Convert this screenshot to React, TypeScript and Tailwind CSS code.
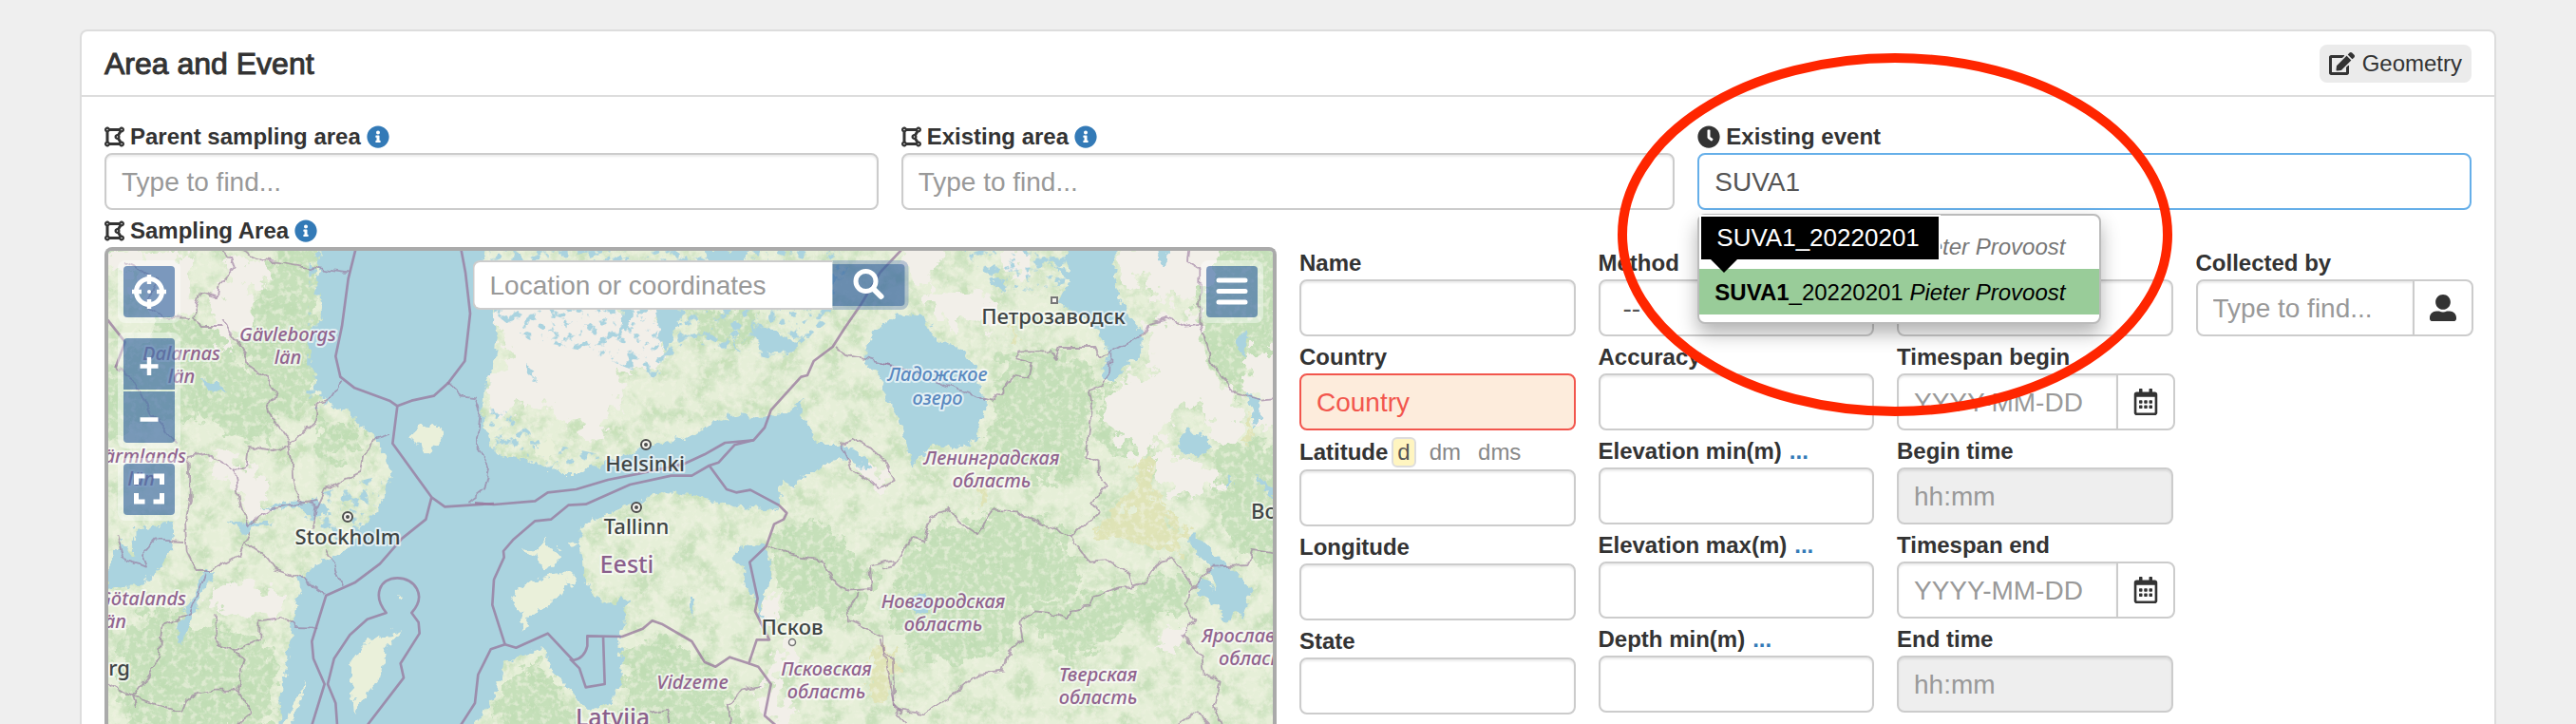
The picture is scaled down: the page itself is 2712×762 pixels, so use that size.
import { useId, type ReactNode } from "react";
import {
  FaClock,
  FaDrawPolygon,
  FaEdit,
  FaInfoCircle,
  FaRegCalendarAlt,
  FaUserAlt,
} from "react-icons/fa";

const base =
  "h-[60px] w-full min-w-0 rounded-lg border-2 px-4 pt-0.5 text-[28px] outline-none";
const control = `${base} border-[#ccc] bg-white text-[#555] shadow-[inset_0_2px_2px_rgba(0,0,0,0.075)] placeholder:text-[#999]`;
const disabledControl = `${base} border-[#ccc] bg-[#eee] text-[#555] shadow-[inset_0_2px_2px_rgba(0,0,0,0.075)] placeholder:text-[#999]`;
const errorControl = `${base} border-[#f2564d] bg-[#fdecdc] text-[#f2564d] placeholder:text-[#f2564d]`;

function Field({
  label,
  before,
  after,
  rowClass = "h-[39px]",
  children,
}: {
  label: string;
  before?: ReactNode;
  after?: ReactNode;
  rowClass?: string;
  children: (id: string) => ReactNode;
}) {
  const id = useId();
  return (
    <div className="relative min-w-0">
      <div
        className={`flex items-center pt-1 text-2xl leading-8 whitespace-nowrap ${rowClass}`}
      >
        {before}
        <label htmlFor={id} className="font-bold">
          {label}
        </label>
        {after}
      </div>
      {children(id)}
    </div>
  );
}

function TextField({
  label,
  placeholder,
  variant = "normal",
  after,
  before,
  rowClass,
}: {
  label: string;
  placeholder?: string;
  variant?: "normal" | "error" | "disabled";
  after?: ReactNode;
  before?: ReactNode;
  rowClass?: string;
}) {
  const look = { normal: control, error: errorControl, disabled: disabledControl };
  return (
    <Field label={label} before={before} after={after} rowClass={rowClass}>
      {(id) => (
        <input
          id={id}
          className={look[variant]}
          placeholder={placeholder}
          disabled={variant === "disabled"}
        />
      )}
    </Field>
  );
}

function AddonField({
  label,
  placeholder,
  action,
  icon,
}: {
  label: string;
  placeholder: string;
  action: string;
  icon: ReactNode;
}) {
  return (
    <Field label={label}>
      {(id) => (
        <div className="-mr-0.5 flex">
          <input
            id={id}
            className={`${control} rounded-r-none`}
            placeholder={placeholder}
          />
          <button
            type="button"
            aria-label={action}
            className="-ml-0.5 flex h-[60px] shrink-0 items-center rounded-r-lg border-2 border-[#ccc] bg-white px-4 text-[28px] text-[#333]"
          >
            {icon}
          </button>
        </div>
      )}
    </Field>
  );
}

const Polygon = () => <FaDrawPolygon className="mr-1.5 h-6 w-[21px] shrink-0" />;
const Info = () => <FaInfoCircle className="ml-1.5 shrink-0 text-[#337ab7]" />;
const More = () => (
  <a href="#more" className="ml-2 font-bold text-[#337ab7]">
    ...
  </a>
);

function FormatToggle() {
  return (
    <span className="ml-1 flex items-center gap-3 text-[#888]">
      <button
        type="button"
        className="h-8 rounded-md border-2 border-[#ddd] bg-[#fff5c0] px-1 leading-7 text-[#555]"
      >
        d
      </button>
      <button type="button" className="px-0.5">
        dm
      </button>
      <button type="button" className="px-1">
        dms
      </button>
    </span>
  );
}

/* ---------- Map ---------- */

const SEA =
  "M340 255 333 293 340 327 327 363 332 410 347 425 363 432 383 450 397 463 412 497 400 533 380 553 367 577 340 590 313 610 317 623 307 657 303 693 297 717 293 770 495 770 520 733 533 697 572 682 580 703 600 723 607 740 623 748 643 738 655 717 653 667 662 633 653 627 643 638 627 630 615 610 610 570 615 550 643 540 660 530 677 527 703 517 737 522 767 533 817 537 823 530 822 503 837 513 847 498 863 498 870 485 887 483 905 490 918 494 914 484 902 474 883 467 863 467 853 450 840 432 847 420 827 435 800 440 780 435 753 443 733 457 700 467 677 470 647 483 607 498 587 498 563 487 520 478 507 437 510 410 520 383 523 350 520 323 507 283 515 255Z";
const LAKES = [
  "M947 330 973 333 983 353 1013 370 1027 387 1030 410 1043 427 1032 440 1028 463 1010 472 983 467 960 492 950 450 933 417 930 403 913 380 910 370 920 350Z",
  "M1123 255 1175 255 1173 293 1183 323 1203 350 1202 373 1187 383 1173 402 1160 397 1167 370 1157 353 1143 333 1113 320 1127 293 1103 277 1125 285Z",
  "M1240 462Q1245 453 1258 455 1273 455 1273 468 1275 480 1258 480 1240 480 1240 462Z",
  "M1255 560 1283 587 1300 603 1318 620 1310 650 1300 642 1290 657 1283 637 1260 627 1263 607 1280 620 1274 597 1253 572Z",
  "M777 577 807 573 812 610 800 643 807 653 800 652 793 627 785 620 783 597 772 590Z",
  "M726 628H733L731 650 726 640Z",
  "M143 557 183 550 180 583 165 600 143 617 110 620 110 603 127 570 140 590Z",
  "M217 598 226 602 210 630 200 655 190 678 186 660 200 633Z",
  "M277 536 300 528 333 527 350 537 330 545 315 533 285 536Z",
  "M240 548 260 550 290 550 262 556 258 566 250 555Z",
  "M1043 292 1060 296 1055 307 1046 303Z",
  "M1218 263 1230 263 1228 280 1220 276Z",
  "M1305 352 1313 348 1310 375 1303 370Z",
  "M1312 414 1326 420 1327 440 1320 450 1318 430Z",
  "M1324 498 1342 520 1342 526 1326 508Z",
  "M960 630 970 622 985 636 978 646 962 644Z",
  "M690 300 720 330 700 370 692 340Z",
  "M660 300 668 330 650 360 656 320Z",
  "M790 340 840 360 855 350 830 372 800 366Z",
  "M770 350 780 372 772 362Z",
  "M740 262 790 262 780 285 750 282Z",
  "M210 400 228 403 238 412 220 410Z",
  "M554 382 562 390 564 402 556 394Z",
  "M1295 500 1300 508 1292 518Z",
];
const ISLANDS = [
  "M432 460 445 448 460 447 468 458 462 466 450 476 440 468Z",
  "M423 663 407 680 403 710 387 730 373 753 370 717 368 700 378 685 390 673Z",
  "M323 715 318 735 304 770 296 770 310 742Z",
  "M538 637 543 620 573 608 597 604 600 616 573 640 558 650 548 667 550 643Z",
  "M548 580 566 578 573 567 580 578 592 583 585 594 572 601 566 585Z",
  "M595 603 603 602 608 611 600 614Z",
  "M563 470 580 463 586 475 580 483 564 480Z",
  "M418 627 424 628 422 632Z",
  "M597 571 608 572 604 577Z",
];
const CREAM = [
  "M116 266 200 266 202 320 196 335 160 332 140 300 150 285 118 290Z",
  "M245 272 275 278 288 293 260 300 272 320 262 345 248 350 236 372 230 350 225 325 230 300Z",
  "M520 322 560 312 620 320 695 325 700 372 684 392 655 394 645 442 620 460 600 440 560 425 540 435 514 438 516 395 535 385 530 350Z",
  "M225 480 245 482 260 490 282 510 280 530 262 550 250 520 230 510Z",
  "M1175 255 1290 255 1282 275 1264 310 1215 320 1212 297 1180 300Z",
  "M1210 338 1262 332 1276 390 1302 425 1305 468 1290 472 1270 445 1262 420 1230 440 1225 470 1210 465 1200 490 1180 460 1160 430 1178 400 1212 398Z",
  "M1240 482 1280 492 1290 515 1240 520 1215 500 1212 482Z",
  "M1310 368 1350 368 1350 452 1328 452 1322 420 1310 395Z",
  "M950 258 990 258 982 290 978 305 1000 310 1040 305 1050 330 1040 345 1010 335 1000 350 985 330 975 300 955 300Z",
  "M1060 262 1080 262 1084 285 1065 292Z",
  "M798 640 815 620 822 640 810 660Z",
  "M815 690 830 670 850 690 820 720 835 752 815 762 800 740Z",
  "M905 490 922 488 935 500 930 515 915 508Z",
  "M1235 650 1245 660 1240 690 1215 680Z",
  "M215 625 260 610 300 625 290 650 230 640Z",
];
const DENSE = [
  "M104 395 130 380 170 330 230 345 250 385 300 420 285 470 240 455 200 430 165 440 104 470Z",
  "M290 255 335 255 335 420 300 440 265 400 255 350 275 320Z",
  "M340 440 370 438 380 470 350 485 325 460Z",
  "M1055 375 1130 372 1155 400 1146 430 1140 500 1100 510 1060 480 1040 460Z",
  "M970 560 1060 535 1120 560 1140 620 1080 640 1050 690 990 700 940 660 950 600Z",
  "M805 560 860 545 920 600 905 640 880 650 830 640 815 600Z",
  "M1270 255 1350 255 1350 365 1310 385 1305 420 1280 390 1260 330Z",
  "M1290 460 1350 470 1350 600 1300 580 1285 530 1260 500Z",
  "M1155 400 1185 410 1180 440 1200 480 1160 475Z",
  "M120 680 160 640 230 660 290 680 285 770 140 770Z",
  "M525 730 560 690 585 720 610 770 520 770Z",
  "M660 680 700 670 760 710 780 770 650 770Z",
  "M1080 640 1140 630 1260 600 1250 640 1190 660 1120 700Z",
  "M725 325 790 320 800 345 770 365 740 360Z",
  "M550 370 570 375 575 400 560 405 545 395Z",
];
const YELLOW = [
  "M1160 545 1190 530 1200 500 1225 540 1255 560 1240 580 1200 570 1150 565Z",
  "M1200 475 1212 480 1210 500 1225 530 1205 510 1195 495Z",
  "M1222 405 1235 415 1228 430Z",
  "M1312 430 1320 440 1322 465 1312 460Z",
  "M1028 510 1042 505 1036 535 1026 530Z",
  "M920 680 945 685 940 740 915 735Z",
  "M1062 335 1075 350 1070 365Z",
];

const SHEETS = [
  {
    name: "west",
    transform: "translate(100 250) scale(0.33333)",
    major: [
      "M825 30 800 130 780 280 760 375 775 440 820 475 930 515 955 532 1000 515 1070 500 1115 460 1168 390 1185 240 1170 110 1155 30",
      "M955 532 940 650 1063 820 1105 850 1260 840",
      "M1063 820 1045 890 970 950 900 1030 820 1090 730 1130 685 1275 690 1330 725 1410 685 1540",
      "M860 1540 975 1390 965 1345 1025 1250 1022 1215 1000 1185C1050 1130 1010 1075 955 1075 900 1075 875 1130 920 1185L860 1205 805 1255 755 1330 735 1410 760 1470 765 1540",
      "M40 260 95 330 65 410",
    ],
    minor: [
      "M370 30 430 60 440 100 395 150 390 190 360 180 335 170 315 250 335 285 395 285",
      "M440 30 530 70 650 92 800 112",
      "M400 260 470 360 480 400 540 440 570 490 540 540 610 640 620 700 625 770 645 830 700 850 690 920",
      "M705 520 695 580 620 650 580 675 485 660 480 710 440 735 455 830 480 910 550 860 700 830",
      "M705 520 750 505 780 455",
      "M1115 460 1160 500 1200 505 1220 560 1205 660 1245 730 1230 800 1180 840",
      "M935 620 885 635 850 690 840 740 730 795 700 860",
      "M440 735 350 680 295 690 300 830 285 900 290 990 320 1050 370 1050 460 1000 490 930",
      "M90 80 200 130 160 215 210 250 300 255",
      "M65 410 120 450 180 560 260 650",
      "M480 970 540 1010 570 1050 660 1080 730 1130",
      "M730 985 760 1040 780 1100",
      "M280 960 190 955 150 1000 165 1040 95 1020 70 940",
      "M380 1195 390 1290 440 1305 520 1270 520 1210 590 1200 630 1230 700 1232",
      "M350 1060 300 1190 215 1220 205 1330 120 1450 200 1475 280 1500 300 1450 380 1430 450 1430 470 1330 440 1305",
      "M450 1430 495 1500 450 1536",
      "M40 1405 120 1450 130 1480",
    ],
  },
  {
    name: "centre",
    transform: "translate(500 250) scale(0.33333)",
    major: [
      "M0 838 60 843 190 832 230 805 320 795 420 765 520 745 660 715 725 685 790 648 880 640 915 600 935 545 1030 440 1050 435 1070 390 1130 345 1165 290 1220 210 1280 110 1365 20",
      "M-45 1540 0 1470 10 1380 50 1300 95 1285 55 1160 60 1080 92 1010 90 990 120 955 190 895 240 890 295 845 350 842 490 780 620 752 685 752 740 720 770 710 820 655 880 640",
      "M740 720 795 795 825 805 870 797 960 845 985 870 975 890 945 905 920 975 868 1025 893 1140 885 1180 930 1270 890 1270 865 1345 805 1325 760 1355 725 1340 685 1275 590 1220 560 1210 530 1235 465 1260 355 1258 355 1290Q345 1330 310 1335L230 1250 130 1295 95 1285",
      "M300 1330 330 1360 350 1420 410 1410 405 1258",
      "M865 1345 895 1355 935 1410 915 1510 950 1540",
    ],
    minor: [
      "M1140 345 1170 372 1240 382 1320 405",
      "M920 975 990 1000 1095 1020 1130 1080 1180 1115 1250 1110 1245 1040 1330 1020",
      "M1215 1120 1180 1170 1185 1210 1290 1260 1290 1310 1320 1340 1325 1480 1350 1500",
      "M1150 650 1190 635 1250 665 1300 710 1325 770 1280 795 1190 730 1150 650",
      "M905 1415 840 1430 800 1480 810 1536",
      "M550 1500 610 1490 620 1536",
    ],
  },
  {
    name: "east",
    transform: "translate(930 250) scale(0.33333)",
    major: [],
    minor: [
      "M40 1490 130 1505 200 1460 300 1380 380 1370 390 1320 440 1270 430 1210 480 1180 530 1185 580 1205 590 1175 650 1165 665 1130 780 1100 830 1085 870 1020 910 1010 980 1105 1040 1040 1150 1035 1165 990 1240 1000",
      "M-10 395 60 415 190 465 340 515 380 480 415 430 460 440 470 400 415 385 430 355 530 355 545 380 560 345 670 345 685 380 820 310 840 270 900 255 950 275 1000 270 1000 190 1000 100 960 75 965 30",
      "M718 370 718 425 690 465 650 480 660 540 640 690 680 710 680 750 705 780 660 840 680 870 590 945 530 915 440 880 420 865 350 860 320 900 300 940 240 900 210 860 150 880 130 960 90 950 30 1040 0 1045",
      "M590 945 650 1025 720 1020 780 1060 790 1100",
      "M1000 270 1040 400 1110 490 1190 515 1240 510",
      "M980 1105 950 1160 985 1210 940 1250 1000 1320 1010 1380 1070 1400 1050 1480 1070 1536",
      "M-10 1270 20 1400 40 1490 70 1536",
      "M930 1536 990 1495 1030 1536",
    ],
  },
];

type Label = [string, number, number, ("start" | "middle" | "end")?];
const REGIONS: Label[] = [
  ["Gävleborgs", 303, 359],
  ["län", 303, 383],
  ["Dalarnas", 191, 379],
  ["län", 191, 403],
  ["Värmlands", 196, 487, "end"],
  ["län", 163, 511, "end"],
  ["Götalands", 196, 637, "end"],
  ["län", 133, 661, "end"],
  ["Псковская", 870, 711],
  ["область", 870, 735],
  ["Vidzeme", 729, 725],
  ["Ленинградская", 1044, 489],
  ["область", 1044, 513],
  ["Новгородская", 993, 640],
  ["область", 993, 664],
  ["Тверская", 1156, 717],
  ["область", 1156, 741],
  ["Ярославская", 1265, 676, "start"],
  ["область", 1283, 700, "start"],
];
const WATERS: Label[] = [
  ["Ладожское", 987, 401],
  ["озеро", 987, 426],
];
const CITIES: Label[] = [
  ["Göteborg", 137, 711, "end"],
  ["Stockholm", 366, 573],
  ["Helsinki", 679, 496],
  ["Tallinn", 670, 562],
  ["Псков", 834, 668],
  ["Петрозаводск", 1109, 341],
  ["Вологда", 1317, 546, "start"],
];
const COUNTRIES: Label[] = [
  ["Eesti", 660, 603],
  ["Latvija", 645, 764],
];

function Labels({ items, className }: { items: Label[]; className: string }) {
  return (
    <g className={className}>
      {items.map(([text, x, y, anchor = "middle"]) => (
        <text key={text + x + y} x={x} y={y} textAnchor={anchor}>
          {text}
        </text>
      ))}
    </g>
  );
}

function BaseMap() {
  const area = {
    x: 100,
    y: 250,
    width: 1250,
    height: 530,
    filterUnits: "userSpaceOnUse" as const,
    colorInterpolationFilters: "sRGB" as const,
  };
  const sheet = { x: 104, y: 254, width: 1246, height: 518 };
  return (
    <svg
      viewBox="114 264 1226 498"
      preserveAspectRatio="xMidYMin slice"
      className="block h-full w-full"
      role="img"
      aria-label="Map of the Baltic region"
    >
      <defs>
        <filter id="coast" {...area}>
          <feTurbulence type="fractalNoise" baseFrequency="0.11" numOctaves="3" seed="4" />
          <feDisplacementMap in="SourceGraphic" scale="13" xChannelSelector="R" yChannelSelector="G" />
        </filter>
        <filter id="patch" {...area}>
          <feTurbulence type="fractalNoise" baseFrequency="0.06" numOctaves="4" seed="9" />
          <feDisplacementMap in="SourceGraphic" scale="40" xChannelSelector="R" yChannelSelector="G" />
        </filter>
        <filter id="wiggle" {...area}>
          <feTurbulence type="fractalNoise" baseFrequency="0.08" numOctaves="2" seed="2" />
          <feDisplacementMap in="SourceGraphic" scale="9" xChannelSelector="R" yChannelSelector="G" />
        </filter>
        <filter id="woods" {...area}>
          <feTurbulence type="fractalNoise" baseFrequency="0.045" numOctaves="5" seed="21" />
          <feColorMatrix values="0 0 0 0 0.765 0 0 0 0 0.87 0 0 0 0 0.715 3.2 0 0 0 -1.35" />
        </filter>
        <filter id="fields" {...area}>
          <feTurbulence type="fractalNoise" baseFrequency="0.16" numOctaves="4" seed="33" />
          <feColorMatrix values="0 0 0 0 0.94 0 0 0 0 0.95 0 0 0 0 0.885 0 4 0 0 -1.9" />
        </filter>
        <filter id="skerries" {...area}>
          <feTurbulence type="fractalNoise" baseFrequency="0.1" numOctaves="4" seed="14" result="n" />
          <feColorMatrix in="n" values="0 0 0 0 0 0 0 0 0 0 0 0 0 0 0 0 0 10 0 -5.6" result="m" />
          <feComposite in="SourceGraphic" in2="m" operator="in" />
        </filter>
      </defs>

      <rect {...sheet} fill="#e6efd8" />
      <rect {...sheet} filter="url(#woods)" opacity="0.85" />
      <g filter="url(#patch)">
        <g fill="#bfdcb3" opacity="0.8">
          {DENSE.map((d) => (
            <path key={d} d={d} />
          ))}
        </g>
        <g fill="#dfe3b4" opacity="0.9">
          {YELLOW.map((d) => (
            <path key={d} d={d} />
          ))}
        </g>
      </g>
      <rect {...sheet} filter="url(#fields)" opacity="0.6" />
      <g filter="url(#patch)" fill="#f2efe9">
        {CREAM.map((d) => (
          <path key={d} d={d} />
        ))}
      </g>
      <g filter="url(#skerries)" fill="#aad3df">
        <path d="M515 262H900L870 340 820 380 780 370 720 360 690 400 620 370 560 360 520 330Z" />
        <path d="M335 520 400 500 410 540 380 570 335 570 320 545Z" />
        <path d="M1010 262H1130L1120 300 1060 310Z" />
        <path d="M500 430 530 430 570 465 640 480 560 500 500 490Z" />
        <path d="M326 262H345V430H322Z" />
      </g>
      <g filter="url(#coast)">
        <g fill="#aad3df">
          <path d={SEA} />
          {LAKES.map((d) => (
            <path key={d} d={d} />
          ))}
        </g>
        <g fill="#eaf0da">
          {ISLANDS.map((d) => (
            <path key={d} d={d} />
          ))}
        </g>
      </g>

      {SHEETS.map((s) => (
        <g key={s.name} fill="none" stroke="#97769c" strokeLinejoin="round">
          <g filter="url(#wiggle)">
            <g transform={s.transform} strokeWidth="5.5" opacity="0.6">
              {s.minor.map((d) => (
                <path key={d} d={d} />
              ))}
            </g>
          </g>
          <g transform={s.transform} strokeWidth="8" opacity="0.75">
            {s.major.map((d) => (
              <path key={d} d={d} />
            ))}
          </g>
        </g>
      ))}

      <g fill="#f7f5f0" stroke="#4d4d4d" strokeWidth="2">
        {[
          [366, 544],
          [680, 468],
          [670, 534],
        ].map(([x, y]) => (
          <g key={x}>
            <circle cx={x} cy={y} r="5" />
            <circle cx={x} cy={y} r="1" />
          </g>
        ))}
        <circle cx="834" cy="676" r="3.5" stroke="#777" strokeWidth="1.5" />
        <rect x="1107" y="313" width="6" height="6" stroke="#777" />
      </g>

      <g
        fontFamily="'Noto Sans', sans-serif"
        paintOrder="stroke"
        stroke="#ffffff"
        strokeOpacity="0.65"
        strokeWidth="4"
        strokeLinejoin="round"
      >
        <Labels items={REGIONS} className="fill-[#91648f] text-[20px] font-medium italic" />
        <Labels items={WATERS} className="fill-[#5a89c0] text-[20px] font-medium italic" />
        <Labels items={CITIES} className="fill-[#3f4545] text-[22px] font-medium" />
        <Labels items={COUNTRIES} className="fill-[#8a5f8c] text-[25px] font-medium" />
      </g>
    </svg>
  );
}

function MapGroup({ children }: { children: ReactNode }) {
  return (
    <div className="flex flex-col gap-0.5 rounded-lg bg-white/40 p-1.5">
      {children}
    </div>
  );
}

function MapButton({
  label,
  round = "rounded",
  children,
}: {
  label: string;
  round?: string;
  children: ReactNode;
}) {
  return (
    <button
      type="button"
      aria-label={label}
      className={`flex size-[54px] items-center justify-center bg-[#003c88]/50 text-white ${round}`}
    >
      <svg viewBox="0 0 54 54" className="size-full" fill="none" stroke="currentColor">
        {children}
      </svg>
    </button>
  );
}

function MapPanel() {
  return (
    <div className="relative min-h-[400px] flex-1 overflow-hidden rounded-t-lg border-4 border-b-0 border-[#aaa] bg-[#aad3df]">
      <div className="absolute inset-0">
        <BaseMap />
      </div>
      <div className="absolute top-2.5 left-2.5 flex flex-col gap-2.5">
        <MapGroup>
          <MapButton label="My location">
            <circle cx="27" cy="27" r="13.5" strokeWidth="5" />
            <path d="M27 9v10M27 35v10M9 27h10M35 27h10" strokeWidth="4.5" />
            <circle cx="27" cy="27" r="1" strokeWidth="2" />
          </MapButton>
        </MapGroup>
        <MapGroup>
          <MapButton label="Zoom in" round="rounded-t">
            <path d="M27 20v19M17.5 29.500h19" strokeWidth="4.5" />
          </MapButton>
          <MapButton label="Zoom out" round="rounded-b">
            <path d="M17.500 29.500h19" strokeWidth="4.5" />
          </MapButton>
        </MapGroup>
        <MapGroup>
          <MapButton label="Full screen">
            <path
              d="M13.500 22v-9h9M31.500 13h9v9M40.500 31v9h-9M22.500 40h-9v-9"
              strokeWidth="5"
            />
          </MapButton>
        </MapGroup>
      </div>
      <div className="absolute top-2.5 right-2.5">
        <MapGroup>
          <MapButton label="Layers">
            <path d="M13 15h28M13 26.500h28M13 38h28" strokeWidth="5" strokeLinecap="round" />
          </MapButton>
        </MapGroup>
      </div>
      <form
        className="absolute top-2.5 left-1/2 flex h-[52px] w-[459px] -translate-x-1/2"
        onSubmit={(e) => e.preventDefault()}
      >
        <input
          aria-label="Location or coordinates"
          placeholder="Location or coordinates"
          className="min-w-0 flex-1 rounded-l-lg border-2 border-r-0 border-[#ccc] bg-white px-4 pt-0.5 text-[28px] outline-none placeholder:text-[#999]"
        />
        <div className="w-20 rounded-r-lg bg-[#7b98bc]/50 py-1 pr-1">
          <button
            type="submit"
            aria-label="Search"
            className="flex size-full items-center justify-center rounded-r bg-[#003c88]/40 text-white"
          >
            <svg viewBox="0 0 34 34" className="size-[34px]" fill="none" stroke="currentColor" strokeLinecap="round">
              <circle cx="14" cy="13" r="10.500" strokeWidth="5" />
              <path d="m23 22 7 7" strokeWidth="6" />
            </svg>
          </button>
        </div>
      </form>
    </div>
  );
}

/* ---------- Existing event ---------- */

function ExistingEvent() {
  return (
    <Field label="Existing event" before={<FaClock className="mr-1.5 shrink-0" />}>
      {(id) => (
        <>
          <input
            id={id}
            defaultValue="SUVA1"
            className={`${base} border-[#66afe9] bg-white text-[#555]`}
          />
          <ul className="absolute top-[103px] left-0 z-10 rounded-lg border-2 border-[#bbb] bg-white py-2 text-2xl whitespace-nowrap shadow-[0_10px_20px_rgba(0,0,0,0.3)]">
            <li className="h-12 pr-9 pl-4 leading-[50px] text-[#777]">
              <b>SUVA1</b>_20220201 <i>Pieter Provoost</i>
            </li>
            <li className="h-12 bg-[#99cc99] pr-9 pl-4 leading-[50px] text-black">
              <b>SUVA1</b>_20220201 <i>Pieter Provoost</i>
            </li>
          </ul>
          <div
            role="tooltip"
            className="absolute top-[106px] left-1 z-20 h-[45px] bg-black pr-5 pl-4 text-[26px] leading-[45px] text-white outline-2 outline-white"
          >
            SUVA1_20220201
            <svg viewBox="0 0 28 14" className="absolute top-full left-2.5 h-3.5 w-7">
              <path d="M0 0h28L14 14Z" />
            </svg>
          </div>
          <svg
            viewBox="0 0 584 382"
            className="pointer-events-none absolute -top-[66px] -left-[84px] z-30 h-[382px] w-[584px]"
            fill="none"
            stroke="#ff2600"
            strokeWidth="10"
          >
            <ellipse cx="292" cy="191" rx="287" ry="186" />
          </svg>
        </>
      )}
    </Field>
  );
}

export default function App() {
  const calendar = <FaRegCalendarAlt className="w-[26px]" />;
  return (
    <main className="flex h-screen flex-col overflow-hidden bg-[#efefef] px-[84px] pt-[31px] font-['Liberation_Sans',Arial,sans-serif] text-[#333]">
      <section className="flex flex-1 flex-col rounded-t-lg border-2 border-b-0 border-[#ddd] bg-white">
        <header className="flex h-[69px] items-center justify-between border-b-2 border-[#ddd] px-6">
          <h1 className="text-[32px] leading-none [-webkit-text-stroke:1px]">
            Area and Event
          </h1>
          <button
            type="button"
            className="flex h-10 items-center gap-2 rounded-lg bg-[#ebebeb] px-2.5 text-2xl"
          >
            <FaEdit className="h-6 w-[27px]" />
            Geometry
          </button>
        </header>
        <div className="flex flex-1 flex-col px-6 pt-5">
          <div className="grid grid-cols-3 gap-6">
            <TextField
              label="Parent sampling area"
              placeholder="Type to find..."
              before={<Polygon />}
              after={<Info />}
            />
            <TextField
              label="Existing area"
              placeholder="Type to find..."
              before={<Polygon />}
              after={<Info />}
            />
            <ExistingEvent />
          </div>
          <div className="grid flex-1 grid-cols-2 gap-6">
            <div className="flex flex-col">
              <h2 className="flex h-[39px] items-center pt-1 text-2xl leading-8 font-bold">
                <Polygon />
                Sampling Area
                <Info />
              </h2>
              <MapPanel />
            </div>
            <div className="grid grid-cols-4 gap-6 pt-[34px]">
              <div>
                <TextField label="Name" />
                <TextField label="Country" placeholder="Country" variant="error" />
                <TextField label="Latitude" rowClass="h-[41px]" after={<FormatToggle />} />
                <TextField label="Longitude" />
                <TextField label="State" />
              </div>
              <div>
                <Field label="Method">
                  {(id) => (
                    <select id={id} className={`${control} appearance-none px-6`}>
                      <option>--</option>
                    </select>
                  )}
                </Field>
                <TextField label="Accuracy" />
                <TextField label="Elevation min(m)" after={<More />} />
                <TextField label="Elevation max(m)" after={<More />} />
                <TextField label="Depth min(m)" after={<More />} />
              </div>
              <div>
                <TextField label="Date" />
                <AddonField
                  label="Timespan begin"
                  placeholder="YYYY-MM-DD"
                  action="Pick begin date"
                  icon={calendar}
                />
                <TextField label="Begin time" placeholder="hh:mm" variant="disabled" />
                <AddonField
                  label="Timespan end"
                  placeholder="YYYY-MM-DD"
                  action="Pick end date"
                  icon={calendar}
                />
                <TextField label="End time" placeholder="hh:mm" variant="disabled" />
              </div>
              <div>
                <AddonField
                  label="Collected by"
                  placeholder="Type to find..."
                  action="Pick collector"
                  icon={<FaUserAlt />}
                />
              </div>
            </div>
          </div>
        </div>
      </section>
    </main>
  );
}
